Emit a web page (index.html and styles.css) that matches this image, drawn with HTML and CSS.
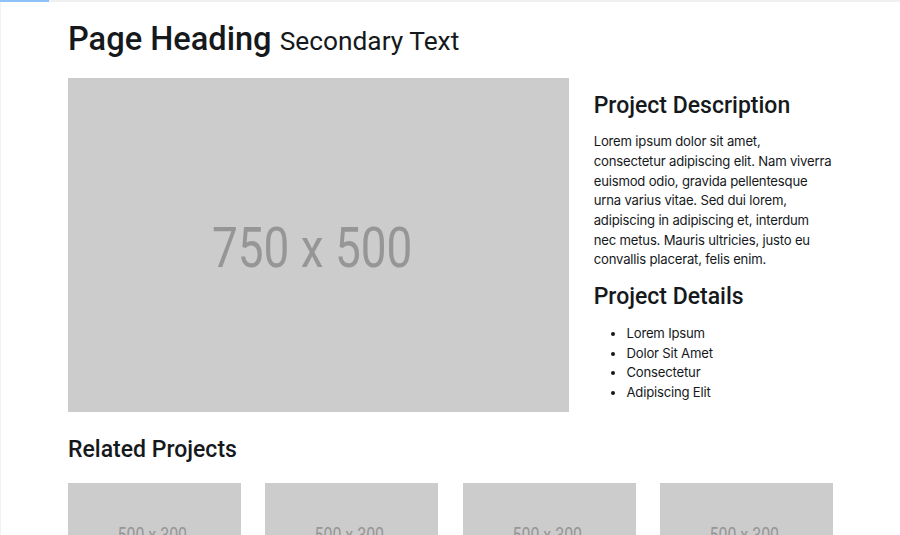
FILE: index.html
```html
<!DOCTYPE html>
<html lang="en">
<head>
<meta charset="utf-8">
<title>Portfolio Item</title>
<link rel="stylesheet" href="styles.css">
</head>
<body>
<div class="topbar"><div class="topbar-fill"></div></div>
<div class="container">
  <h1 class="page-title">Page Heading <small>Secondary Text</small></h1>
  <div class="main-row">
    <div class="ph ph-large"><span class="ph-text">750 x 500</span></div>
    <div class="side">
      <h3 class="side-title">Project Description</h3>
      <p class="side-text">Lorem ipsum dolor sit amet, consectetur adipiscing elit. Nam viverra euismod odio, gravida pellentesque urna varius vitae. Sed dui lorem, adipiscing in adipiscing et, interdum nec metus. Mauris ultricies, justo eu convallis placerat, felis enim.</p>
      <h3 class="side-title">Project Details</h3>
      <ul class="details">
        <li>Lorem Ipsum</li>
        <li>Dolor Sit Amet</li>
        <li>Consectetur</li>
        <li>Adipiscing Elit</li>
      </ul>
    </div>
  </div>
  <h3 class="related-title">Related Projects</h3>
  <div class="related-row">
    <div class="ph ph-small"><span class="ph-text">500 x 300</span></div>
    <div class="ph ph-small"><span class="ph-text">500 x 300</span></div>
    <div class="ph ph-small"><span class="ph-text">500 x 300</span></div>
    <div class="ph ph-small"><span class="ph-text">500 x 300</span></div>
  </div>
</div>
</body>
</html>
```
FILE: styles.css
```css
* { box-sizing: border-box; }
html, body { margin: 0; padding: 0; }
body {
  font-family: Inter, "Noto Sans", "Liberation Sans", sans-serif;
  font-size: 13.14px;
  letter-spacing: -0.2px;
  line-height: 1.5;
  color: #16191c;
  background: #fff;
  border-left: 1px solid #f2f2f2;
  min-height: 535px;
  overflow: hidden;
}
.topbar {
  position: fixed;
  top: 0; left: 0; right: 0;
  height: 2px;
  background: #f0f0f0;
}
.topbar-fill {
  width: 49px;
  height: 2px;
  background: #8ec2f8;
}
.container {
  width: 765px;
  margin: 0 auto;
}
.page-title,
.side-title,
.related-title {
  font-family: Roboto, "Liberation Sans", sans-serif;
  letter-spacing: 0;
  font-weight: 500;
  line-height: 1.2;
  color: #16191c;
}
.page-title {
  font-size: 32.6px;
  margin: 19.7px 0;
}
.page-title small {
  font-size: 26.3px;
  font-weight: 400;
}
.main-row {
  display: grid;
  grid-template-columns: 501px 1fr;
  column-gap: 24.7px;
}
.ph {
  background: #cccccc;
  display: flex;
  align-items: center;
  justify-content: center;
  overflow: hidden;
}
.ph-text {
  display: inline-block;
  font-family: Roboto, "Liberation Sans", sans-serif;
  letter-spacing: 0;
  color: #969696;
  transform: scaleX(0.82);
  white-space: nowrap;
}
.ph-large { height: 334px; }
.ph-large .ph-text { font-size: 56px; margin: 5px 12px 0 0; }
.ph-small { height: 103.4px; }
.ph-small .ph-text { font-size: 19.4px; margin: 2px 4px 0 0; }
.side-title {
  font-size: 23px;
  margin: 13.1px 0;
}
.side-text { margin: 0 0 13.1px; }
.details {
  margin: 0 0 13.1px;
  padding-left: 32.8px;
}
.related-title {
  font-size: 23px;
  margin: 19.7px 0;
}
.related-row {
  display: grid;
  grid-template-columns: repeat(4, 1fr);
  column-gap: 24.6px;
}
```
